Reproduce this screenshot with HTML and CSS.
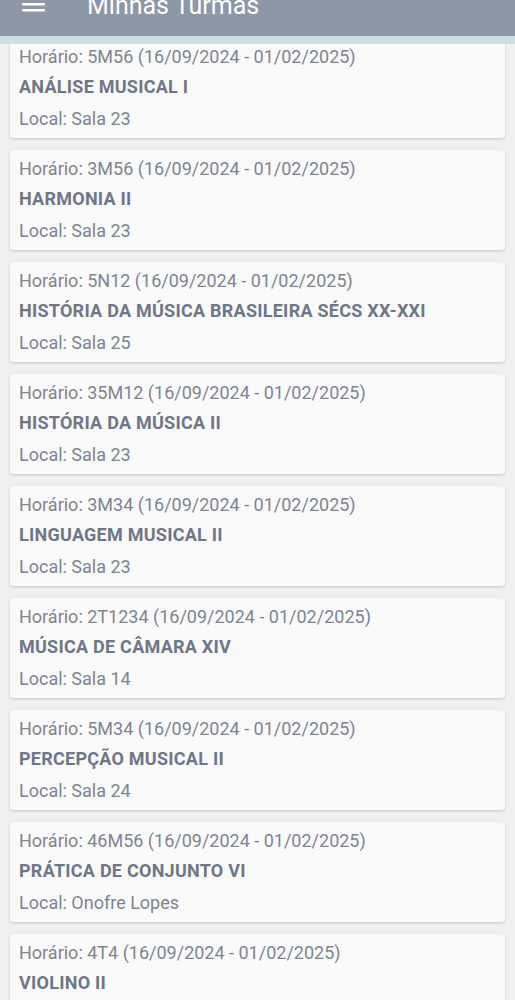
FILE: index.html
```html
<!DOCTYPE html>
<html lang="pt-BR">
<head>
    <meta charset="UTF-8">
    <title>Minhas Turmas</title>
    <link rel="stylesheet" href="styles.css">
</head>
<body>
    <header class="app-bar">
        <div class="toolbar">
            <svg class="menu-icon" width="24" height="24" viewBox="0 0 24 24">
                <rect x="0" y="5" width="23" height="2.5" rx="1" fill="#ffffff"/>
                <rect x="0" y="11" width="23" height="2.5" rx="1" fill="#ffffff"/>
                <rect x="0" y="17" width="23" height="2.5" rx="1" fill="#ffffff"/>
            </svg>
            <h1 class="title">Minhas Turmas</h1>
        </div>
        <div class="strip"></div>
    </header>

    <main class="class-list">
        <div class="card">
            <p class="schedule">Horário: 5M56 (16/09/2024 - 01/02/2025)</p>
            <p class="name">ANÁLISE MUSICAL I</p>
            <p class="room">Local: Sala 23</p>
        </div>
        <div class="card">
            <p class="schedule">Horário: 3M56 (16/09/2024 - 01/02/2025)</p>
            <p class="name">HARMONIA II</p>
            <p class="room">Local: Sala 23</p>
        </div>
        <div class="card">
            <p class="schedule">Horário: 5N12 (16/09/2024 - 01/02/2025)</p>
            <p class="name">HISTÓRIA DA MÚSICA BRASILEIRA SÉCS XX-XXI</p>
            <p class="room">Local: Sala 25</p>
        </div>
        <div class="card">
            <p class="schedule">Horário: 35M12 (16/09/2024 - 01/02/2025)</p>
            <p class="name">HISTÓRIA DA MÚSICA II</p>
            <p class="room">Local: Sala 23</p>
        </div>
        <div class="card">
            <p class="schedule">Horário: 3M34 (16/09/2024 - 01/02/2025)</p>
            <p class="name">LINGUAGEM MUSICAL II</p>
            <p class="room">Local: Sala 23</p>
        </div>
        <div class="card">
            <p class="schedule">Horário: 2T1234 (16/09/2024 - 01/02/2025)</p>
            <p class="name">MÚSICA DE CÂMARA XIV</p>
            <p class="room">Local: Sala 14</p>
        </div>
        <div class="card">
            <p class="schedule">Horário: 5M34 (16/09/2024 - 01/02/2025)</p>
            <p class="name">PERCEPÇÃO MUSICAL II</p>
            <p class="room">Local: Sala 24</p>
        </div>
        <div class="card">
            <p class="schedule">Horário: 46M56 (16/09/2024 - 01/02/2025)</p>
            <p class="name">PRÁTICA DE CONJUNTO VI</p>
            <p class="room">Local: Onofre Lopes</p>
        </div>
        <div class="card">
            <p class="schedule">Horário: 4T4 (16/09/2024 - 01/02/2025)</p>
            <p class="name">VIOLINO II</p>
            <p class="room">Local: Sala 23</p>
        </div>
    </main>
</body>
</html>
```

FILE: styles.css
```css
body {
    margin: 0;
    background-color: #eef0f2;
    font-family: Roboto, "Noto Sans", sans-serif;
}

.app-bar {
    position: fixed;
    top: 0;
    left: 0;
    right: 0;
    z-index: 10;
}

.toolbar {
    height: 36px;
    overflow: hidden;
    background-color: #8e97a6;
    display: flex;
    align-items: flex-end;
}

.menu-icon {
    flex: none;
    margin: 0 0 20px 22px;
}

.title {
    margin: 0 0 18px 41px;
    font-size: 25px;
    font-weight: 400;
    line-height: 1;
    color: #ffffff;
}

.strip {
    height: 8px;
    background-color: #cce0e2;
}

.class-list {
    display: flex;
    flex-direction: column;
    gap: 12px;
    padding: 38px 10px 20px;
}

.card {
    height: 100px;
    box-sizing: border-box;
    padding: 8px 9px;
    background-color: #fafafa;
    border-radius: 4px;
    box-shadow: 0 1px 3px rgba(0, 0, 0, 0.18);
}

.card p {
    margin: 0;
    font-size: 18px;
    line-height: 22px;
    white-space: nowrap;
}

.schedule {
    color: #7f8590;
}

.name {
    margin-top: 8px !important;
    font-weight: 700;
    letter-spacing: 0.25px;
    color: #6f7686;
}

.room {
    margin-top: 10px !important;
    color: #7f8590;
}
```
